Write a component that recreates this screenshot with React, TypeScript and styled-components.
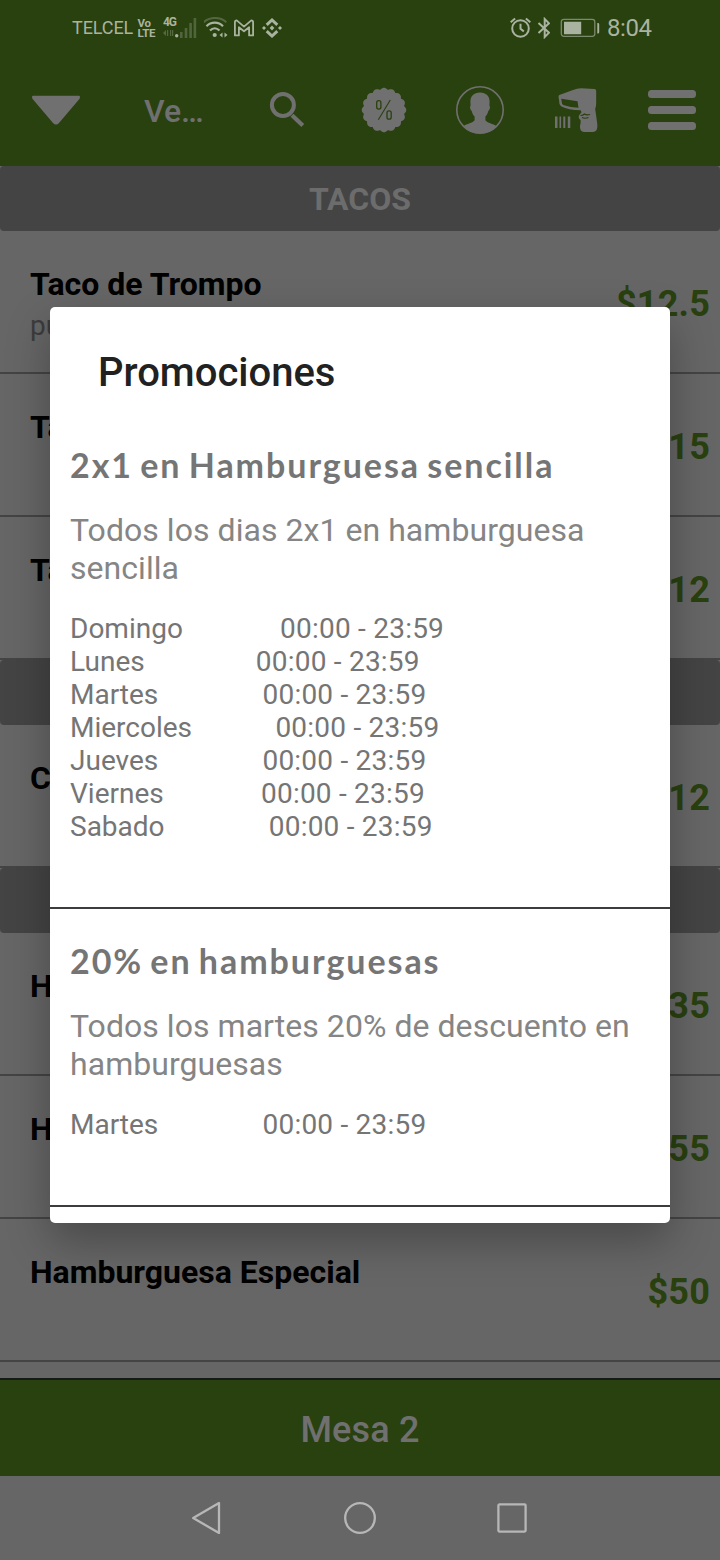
import React from "react";
import styled, { createGlobalStyle } from "styled-components";

const color = {
  green: "#29400f",
  page: "#666666",
  band: "#444444",
  dim: "#707070",
  status: "#a9b39f",
};

const GlobalStyle = createGlobalStyle`
  * { box-sizing: border-box; }
  body { margin: 0; background: ${color.page}; font-family: Roboto, "Liberation Sans", sans-serif; }
  svg { display: block; flex: none; }
`;

const Screen = styled.div`
  position: relative;
  width: 720px;
  height: 1560px;
  overflow: hidden;
  display: flex;
  flex-direction: column;
  background: ${color.page};
`;

const Header = styled.header`
  flex: none;
  height: 166px;
  background: ${color.green};
`;

const StatusBar = styled.div`
  height: 54px;
  padding: 2px 68px 0 72px;
  display: flex;
  align-items: center;
  justify-content: space-between;
  color: ${color.status};
`;

const StatusGroup = styled.div`
  display: flex;
  align-items: center;
`;

const Carrier = styled.span`
  width: 65px;
  font-size: 18px;
  line-height: 22px;
  letter-spacing: -0.1px;
  white-space: nowrap;
`;

const VoLte = styled.span`
  width: 26px;
  padding-left: 0.5px;
  font-size: 11.5px;
  font-weight: 700;
  line-height: 10.5px;
  letter-spacing: -0.3px;
`;

const Signal = styled.div`
  display: flex;
  height: 22px;
  margin-right: 7px;
`;

const Network = styled.div`
  width: 12px;
  display: flex;
  flex-direction: column;
  font-size: 12px;
  font-weight: 700;
  line-height: 11px;
  letter-spacing: -1.2px;
`;

const Slot = styled.div<{ $after: number }>`
  margin-right: ${(p) => p.$after}px;
`;

const Clock = styled.span`
  width: 45px;
  font-size: 24px;
  line-height: 28px;
  letter-spacing: -0.4px;
  white-space: nowrap;
`;

const Toolbar = styled.nav`
  height: 112px;
  display: grid;
  grid-template-columns: 112px 128px repeat(5, 96px);
  align-items: center;
  color: ${color.dim};
`;

const Tool = styled.div`
  display: flex;
  justify-content: center;
`;

const ToolbarTitle = styled.div`
  padding: 1px 0 0 32px;
  font-size: 32px;
  font-weight: 500;
  line-height: 40px;
`;

const List = styled.main`
  flex: none;
  height: 1212px;
`;

const Section = styled.h2`
  height: 65px;
  margin: 0;
  padding-top: 1px;
  border-radius: 4px;
  background: ${color.band};
  color: #6c6c6c;
  font-size: 32px;
  font-weight: 700;
  line-height: 64px;
  text-align: center;
`;

const Row = styled.article`
  height: 143px;
  padding: 0 10px 0 30px;
  display: flex;
  justify-content: space-between;
  border-bottom: 2px solid ${color.band};
`;

const RowText = styled.div`
  padding-top: 34px;
`;

const Name = styled.div`
  color: #000;
  font-size: 32px;
  font-weight: 700;
  line-height: 38px;
`;

const Detail = styled.div`
  margin-top: 6px;
  color: #3c3c3c;
  font-size: 28px;
  line-height: 33px;
`;

const Price = styled.div`
  padding-top: 52px;
  color: ${color.green};
  font-size: 36px;
  font-weight: 700;
  line-height: 42px;
  letter-spacing: 0.2px;
`;

const TableBar = styled.footer`
  height: 98px;
  padding-top: 4px;
  flex: none;
  border-top: 2px solid #131a17;
  background: ${color.green};
  color: ${color.dim};
  font-size: 36px;
  font-weight: 500;
  line-height: 93px;
  letter-spacing: 0.15px;
  text-align: center;
`;

const NavBar = styled.div`
  height: 84px;
  display: flex;
  align-items: center;
  justify-content: center;
  gap: 120px;
  color: #b7b7b7;
`;

const Dialog = styled.section`
  position: absolute;
  top: 307px;
  left: 50px;
  width: 620px;
  height: 916px;
  border-radius: 5px;
  background: #fff;
  box-shadow: 0 18px 44px rgba(0, 0, 0, 0.29);
`;

const DialogTitle = styled.h1`
  margin: 0 0 16px;
  padding: 42px 48px 0;
  color: #212121;
  font-size: 40px;
  font-weight: 500;
  line-height: 48px;
`;

const Promo = styled.article`
  padding: 32px 20px 64px;
  border-bottom: 2px solid #3c3c3e;
  color: #757575;
`;

const PromoTitle = styled.h3`
  margin: 0;
  font-family: Lato, Roboto, sans-serif;
  font-size: 34px;
  font-weight: 700;
  line-height: 40px;
  letter-spacing: 1.95px;
  word-spacing: -3px;
`;

const PromoText = styled.p`
  margin: 26px 0 25px;
  color: #858585;
  font-size: 32px;
  line-height: 38px;
  letter-spacing: 0.05px;
`;

const Hours = styled.div`
  font-size: 28px;
  line-height: 33px;
  white-space: pre;
`;

const Time = styled.span`
  letter-spacing: 0.22px;
`;

const sections = [
  {
    title: "TACOS",
    items: [
      { name: "Taco de Trompo", detail: "puerco", price: "$12.5" },
      { name: "Taco", price: "$15" },
      { name: "Taco", price: "$12" },
    ],
  },
  { title: "", items: [{ name: "Coca", price: "$12" }] },
  {
    title: "",
    items: [
      { name: "Hamburguesa", price: "$35" },
      { name: "Hamburguesa", price: "$55" },
      { name: "Hamburguesa Especial", price: "$50" },
    ],
  },
] as { title: string; items: { name: string; detail?: string; price: string }[] }[];

const promos = [
  {
    title: "2x1 en Hamburguesa sencilla",
    text: "Todos los dias 2x1 en hamburguesa sencilla",
    days: ["Domingo", "Lunes", "Martes", "Miercoles", "Jueves", "Viernes", "Sabado"],
  },
  {
    title: "20% en hamburguesas",
    text: "Todos los martes 20% de descuento en hamburguesas",
    days: ["Martes"],
  },
];

const badgePath = (() => {
  const points: string[] = [];
  for (let i = 0; i <= 160; i++) {
    const a = (i / 160) * Math.PI * 2;
    const r = 20.4 + 1.9 * Math.abs(Math.cos(a * 8));
    points.push(`${(24 + r * Math.sin(a)).toFixed(2)} ${(24 - r * Math.cos(a)).toFixed(2)}`);
  }
  return `M${points.join("L")}Z`;
})();

const StatusIcons = () => (
  <StatusBar>
    <StatusGroup>
      <Carrier>TELCEL</Carrier>
      <VoLte>
        Vo
        <br />
        LTE
      </VoLte>
      <Signal>
        <Network>
          4G
          <svg width="12" height="10" viewBox="0 0 12 10" fill="currentColor" opacity=".35">
            <path d="M0 5l3-3v6zM4 2h1.200v6H4zM7 2h1.200v6H7zM9 2h1.200v6H9z" />
          </svg>
        </Network>
        <svg width="22" height="22" viewBox="0 0 22 22" fill="currentColor">
          <circle cx="1.700" cy="18.800" r="1.700" />
          <path
            opacity=".32"
            d="M5 15h2.600v6H5zM9.700 11h2.600v10H9.700zM14.300 6h2.600v15h-2.600zM18.600 1h2.600v20h-2.600z"
          />
        </svg>
      </Signal>
      <Slot $after={6}>
        <svg width="24" height="22" viewBox="0 0 24 22" fill="none" stroke="currentColor">
          <path d="M-.3 5.200C5.500-.3 16.500-.3 22.300 5.200" strokeWidth="2" opacity=".35" />
          <path d="M2.500 9.200C7 4.500 14.500 4.500 19 9.200" strokeWidth="2.200" />
          <path d="M6 13.500c3-3 6.500-3 9.500 0" strokeWidth="2.200" />
          <circle cx="10.700" cy="18" r="2.100" fill="currentColor" stroke="none" />
          <path d="M18.500 15.500v5l-3-2.500zM20.500 15.500v5l3-2.500z" fill="currentColor" stroke="none" />
        </svg>
      </Slot>
      <Slot $after={8}>
        <svg width="20" height="18" viewBox="0 0 20 18" fill="none" stroke="currentColor" strokeWidth="1.800">
          <path d="M.9 3.200Q.9 1.400 2.700 1.400L10 7.600l7.300-6.200Q19.100 1.400 19.100 3.200V16.400h-4V8.200L10 12.300 4.900 8.200v8.200h-4z" strokeLinejoin="round" />
        </svg>
      </Slot>
      <svg width="20" height="20" viewBox="0 0 20 20" fill="none" stroke="currentColor">
        <path d="M4.700 6.800L10 2l5.300 4.800M4.700 13.200L10 18l5.300-4.800" strokeWidth="3" />
        <path d="M10 7.600l2.400 2.400-2.400 2.400L7.600 10zM2 8l2 2-2 2-2-2zM18 8l2 2-2 2-2-2z" fill="currentColor" stroke="none" />
      </svg>
    </StatusGroup>
    <StatusGroup>
      <Slot $after={6}>
        <svg width="22" height="22" viewBox="0 0 22 22" fill="none" stroke="currentColor" strokeWidth="2">
          <circle cx="11.500" cy="11.500" r="8.300" />
          <path d="M11.500 6.800v5l3.300 2.600M1.700 5.200l4.400-3.700M21.300 5.200l-4.400-3.700" />
        </svg>
      </Slot>
      <Slot $after={10}>
        <svg width="13" height="22" viewBox="0 0 13 22" fill="none" stroke="currentColor" strokeWidth="2">
          <path d="M1.500 6L12 15.700 7.700 20V2L12 6.300 1.500 16" />
        </svg>
      </Slot>
      <Slot $after={7}>
        <svg width="40" height="20" viewBox="0 0 40 20" fill="currentColor">
          <rect x="1.300" y="1.300" width="33.500" height="17" rx="2.500" fill="none" stroke="currentColor" strokeWidth="1.300" opacity=".65" />
          <path d="M4 3.800h17.200v12.400H4zM37.300 5H38a1.200 1.200 0 0 1 1.200 1.200v8A1.200 1.200 0 0 1 38 15.400h-.7z" />
        </svg>
      </Slot>
      <Clock>8:04</Clock>
    </StatusGroup>
  </StatusBar>
);

const ToolbarIcons = () => (
  <Toolbar>
    <Tool>
      <svg width="48" height="30" viewBox="0 0 48 30" fill="currentColor">
        <path d="M1 .8h46q1.500 0 .6 3L27 28q-3 3-6 0L.4 3.800Q-.5.8 1 .8z" />
      </svg>
    </Tool>
    <ToolbarTitle>Ve…</ToolbarTitle>
    <Tool>
      <svg width="48" height="48" viewBox="0 0 48 48" fill="none" stroke="currentColor">
        <circle cx="18.900" cy="19" r="11" strokeWidth="4" />
        <path d="M28 29.200L38.800 39.500" strokeWidth="4.200" />
      </svg>
    </Tool>
    <Tool>
      <svg width="48" height="48" viewBox="0 0 48 48">
        <path d={badgePath} fill="currentColor" />
        <g fill="none" stroke={color.green} strokeWidth="1.300">
          <rect x="16.700" y="14.700" width="4.200" height="8.400" rx="2" />
          <rect x="27" y="24.800" width="4.200" height="8.400" rx="2" />
          <path d="M30.300 14L18.300 33.800" strokeWidth="1.100" />
        </g>
      </svg>
    </Tool>
    <Tool>
      <svg width="48" height="48" viewBox="0 0 48 48" fill="currentColor">
        <circle cx="24" cy="24" r="23.200" fill="none" stroke="currentColor" strokeWidth="1.600" />
        <path d="M24 6.500c6.200 0 9.800 3.800 9.600 9.500 0 1.200-.2 2.500-.2 3.500 1 .7.600 4.300-1 5.300-.6 2.700-1.700 4.400-3 5.800v3.600c2 2.800 7.500 3.400 11.300 6A22.500 22.500 0 0 1 7.300 40.200c3.800-2.600 9.300-3.200 11.300-6v-3.600c-1.300-1.400-2.400-3.100-3-5.800-1.600-1-2-4.600-1-5.300 0-1-.2-2.300-.2-3.500-.2-5.700 3.400-9.500 9.600-9.500z" />
      </svg>
    </Tool>
    <Tool>
      <svg width="48" height="48" viewBox="0 0 48 48" fill="currentColor">
        <path
          fillRule="evenodd"
          d="M7.300 9L21 4q4-1.800 8-1.800L42.500 3Q44.200 3.200 44.200 5v12q0 3-1 6l2.100 15q.8 7.500-4 8H32q-4.500-.5-4-6 .9-3 .6-6-3-2-1.300-5l2.200-2.800-.8-2Q16 24 9.500 20.500 7 19 7.200 15L6.500 11q0-1.500.8-2zM9.300 12.800l.7 4.600q.2 1.300 2 1.800 6.500 2 14.500 2.600l-1-6.500z"
        />
        <path d="M28.500 29.500q2.500 0 4-1.500 2 1.500 5.500.5M30 31.500q3 1.500 6.500 0" fill="none" stroke={color.green} strokeWidth="1.200" />
        <path d="M3 30.500h2.500V42H3zM7.500 30.500h1.600V42H7.500zM11.300 30.500h2V42h-2zM15.800 30.500h2.500V42h-2.500z" />
      </svg>
    </Tool>
    <Tool>
      <svg width="48" height="40" viewBox="0 0 48 40" fill="currentColor">
        <rect width="48" height="8" rx="3.500" />
        <rect y="16" width="48" height="8" rx="3.500" />
        <rect y="32" width="48" height="8" rx="3.500" />
      </svg>
    </Tool>
  </Toolbar>
);

export default function App() {
  return (
    <>
      <GlobalStyle />
      <Screen>
        <Header>
          <StatusIcons />
          <ToolbarIcons />
        </Header>
        <List>
          {sections.map((section, i) => (
            <React.Fragment key={i}>
              <Section>{section.title}</Section>
              {section.items.map((item, n) => (
                <Row key={n}>
                  <RowText>
                    <Name>{item.name}</Name>
                    {item.detail && <Detail>{item.detail}</Detail>}
                  </RowText>
                  <Price>{item.price}</Price>
                </Row>
              ))}
            </React.Fragment>
          ))}
        </List>
        <TableBar>Mesa 2</TableBar>
        <NavBar>
          <svg width="32" height="32" viewBox="0 0 32 32" fill="none" stroke="currentColor" strokeWidth="2.300" strokeLinejoin="round">
            <path d="M1.200 16L27 1v30z" />
          </svg>
          <svg width="32" height="32" viewBox="0 0 32 32" fill="none" stroke="currentColor" strokeWidth="2.300">
            <circle cx="16" cy="16" r="14.850" />
          </svg>
          <svg width="32" height="32" viewBox="0 0 32 32" fill="none" stroke="currentColor" strokeWidth="2.300">
            <rect x="2.400" y="2.400" width="27.200" height="27.200" rx="1" />
          </svg>
        </NavBar>
        <Dialog role="dialog">
          <DialogTitle>Promociones</DialogTitle>
          {promos.map((promo) => (
            <Promo key={promo.title}>
              <PromoTitle>{promo.title}</PromoTitle>
              <PromoText>{promo.text}</PromoText>
              {promo.days.map((day) => (
                <Hours key={day}>
                  {day.padEnd(21)}
                  <Time>00:00 - 23:59</Time>
                </Hours>
              ))}
            </Promo>
          ))}
        </Dialog>
      </Screen>
    </>
  );
}
